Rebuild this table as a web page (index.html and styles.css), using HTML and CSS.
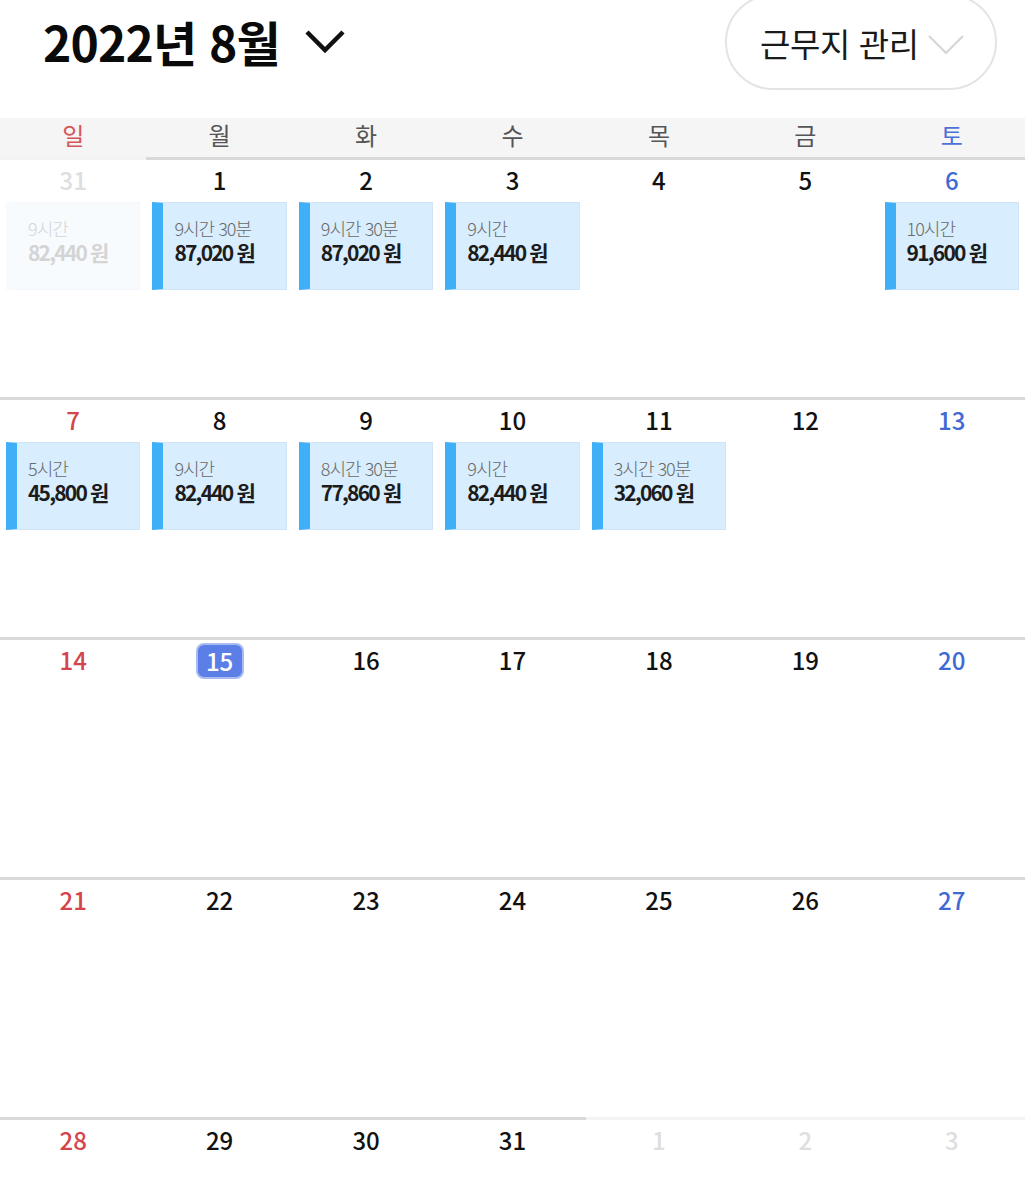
FILE: index.html
```html
<!DOCTYPE html>
<html lang="ko">
<head>
<meta charset="utf-8">
<link rel="stylesheet" href="styles.css">
</head>
<body>
<div class="page">
  <header class="top">
    <div class="title">
      <span class="title-text">2022년 8월</span>
      <svg class="title-chev" width="42" height="26" viewBox="0 0 42 26"><path d="M3 4 L21 22 L39 4" fill="none" stroke="#111" stroke-width="4.5" stroke-linecap="butt" stroke-linejoin="miter"/></svg>
    </div>
    <div class="place-btn">
      <span>근무지 관리</span>
      <svg width="38" height="22" viewBox="0 0 38 22"><path d="M2 3 L19 20 L36 3" fill="none" stroke="#d6d6d6" stroke-width="2.2"/></svg>
    </div>
  </header>

  <div class="weekdays">
    <div class="wd sun">일</div><div class="wd">월</div><div class="wd">화</div><div class="wd">수</div><div class="wd">목</div><div class="wd">금</div><div class="wd sat">토</div>
  </div>

  <div class="week">
    <div class="cell other"><div class="num">31</div><div class="card faded"><div class="hrs">9시간</div><div class="amt">82,440 원</div></div></div>
    <div class="cell"><div class="num">1</div><div class="card"><div class="hrs">9시간 30분</div><div class="amt">87,020 원</div></div></div>
    <div class="cell"><div class="num">2</div><div class="card"><div class="hrs">9시간 30분</div><div class="amt">87,020 원</div></div></div>
    <div class="cell"><div class="num">3</div><div class="card"><div class="hrs">9시간</div><div class="amt">82,440 원</div></div></div>
    <div class="cell"><div class="num">4</div></div>
    <div class="cell"><div class="num">5</div></div>
    <div class="cell"><div class="num sat">6</div><div class="card"><div class="hrs">10시간</div><div class="amt">91,600 원</div></div></div>
  </div>

  <div class="week">
    <div class="cell"><div class="num sun">7</div><div class="card"><div class="hrs">5시간</div><div class="amt">45,800 원</div></div></div>
    <div class="cell"><div class="num">8</div><div class="card"><div class="hrs">9시간</div><div class="amt">82,440 원</div></div></div>
    <div class="cell"><div class="num">9</div><div class="card"><div class="hrs">8시간 30분</div><div class="amt">77,860 원</div></div></div>
    <div class="cell"><div class="num">10</div><div class="card"><div class="hrs">9시간</div><div class="amt">82,440 원</div></div></div>
    <div class="cell"><div class="num">11</div><div class="card"><div class="hrs">3시간 30분</div><div class="amt">32,060 원</div></div></div>
    <div class="cell"><div class="num">12</div></div>
    <div class="cell"><div class="num sat">13</div></div>
  </div>

  <div class="week">
    <div class="cell"><div class="num sun">14</div></div>
    <div class="cell"><div class="num"><span class="today">15</span></div></div>
    <div class="cell"><div class="num">16</div></div>
    <div class="cell"><div class="num">17</div></div>
    <div class="cell"><div class="num">18</div></div>
    <div class="cell"><div class="num">19</div></div>
    <div class="cell"><div class="num sat">20</div></div>
  </div>

  <div class="week">
    <div class="cell"><div class="num sun">21</div></div>
    <div class="cell"><div class="num">22</div></div>
    <div class="cell"><div class="num">23</div></div>
    <div class="cell"><div class="num">24</div></div>
    <div class="cell"><div class="num">25</div></div>
    <div class="cell"><div class="num">26</div></div>
    <div class="cell"><div class="num sat">27</div></div>
  </div>

  <div class="week last">
    <div class="cell"><div class="num sun">28</div></div>
    <div class="cell"><div class="num">29</div></div>
    <div class="cell"><div class="num">30</div></div>
    <div class="cell"><div class="num">31</div></div>
    <div class="cell other"><div class="num">1</div></div>
    <div class="cell other"><div class="num">2</div></div>
    <div class="cell other"><div class="num">3</div></div>
  </div>
</div>
</body>
</html>
```

FILE: styles.css
```css
* { box-sizing: border-box; }
html, body {
  margin: 0;
  padding: 0;
  background: #fff;
  overflow: hidden;
}
body {
  font-family: "Noto Sans CJK KR", "Noto Sans", sans-serif;
  color: #111;
}
.page {
  width: 1025px;
  height: 1204px;
  overflow: hidden;
}
.top {
  height: 118px;
  display: flex;
  justify-content: space-between;
  align-items: flex-start;
}
.title {
  display: flex;
  align-items: center;
  padding-left: 43px;
  padding-top: 10px;
  gap: 24px;
}
.title-text {
  font-size: 48px;
  font-weight: 700;
  line-height: 62px;
  letter-spacing: -0.8px;
  color: #0a0a0a;
}
.title-chev {
  margin-top: 0;
}
.place-btn {
  margin-top: -6px;
  margin-right: 28px;
  width: 272px;
  height: 96px;
  border: 2px solid #e4e4e4;
  border-radius: 48px;
  display: flex;
  align-items: center;
  padding-left: 33px;
  gap: 8px;
}
.place-btn span {
  font-size: 33px;
  font-weight: 400;
  color: #1a1a1a;
  letter-spacing: -0.4px;
  padding-top: 2px;
}
.place-btn svg {
  margin-top: 4px;
}
.weekdays {
  display: grid;
  grid-template-columns: repeat(7, 1fr);
  height: 39px;
  background: #f5f5f5;
}
.wd {
  display: flex;
  align-items: center;
  justify-content: center;
  font-size: 24px;
  color: #555;
  line-height: 1;
  padding-bottom: 6px;
}
.wd.sun { color: #d4565a; }
.wd.sat { color: #4c72d6; }

.week {
  display: grid;
  grid-template-columns: repeat(7, 1fr);
  height: 240px;
}
.cell {
  border-top: 3px solid #d9d9d9;
  padding: 0 6px;
  display: flex;
  flex-direction: column;
}
.cell.other {
  border-top-color: #f3f3f3;
}
.num {
  height: 40px;
  display: flex;
  align-items: center;
  justify-content: center;
  font-size: 24px;
  font-weight: 500;
  color: #111;
  line-height: 1;
}
.num.sun { color: #d4464b; }
.num.sat { color: #3f6ad4; }
.cell.other .num { color: #dedede; }
.today {
  display: inline-flex;
  align-items: center;
  justify-content: center;
  width: 48px;
  height: 36px;
  border-radius: 8px;
  background: #5b7fe7;
  border: 2px solid #a9bcf2;
  color: #fff;
  font-weight: 500;
  margin-top: 1px;
}
.card {
  margin-top: 2px;
  height: 88px;
  background: #d8edfd;
  border: 1px solid #cfe5f7;
  border-left: 11px solid #3fb0f7;
  padding: 14px 0 0 11px;
}
.card.faded {
  background: #f8fbfe;
  border-color: #f3f7fb;
  border-left: 11px solid #f8fbfe;
}
.hrs {
  font-size: 18px;
  color: #6a6a6a;
  letter-spacing: -1px;
  line-height: 22px;
  font-weight: 300;
}
.amt {
  font-size: 21px;
  font-weight: 700;
  color: #1c1c1c;
  letter-spacing: -1.8px;
  line-height: 26px;
}
.card.faded .hrs, .card.faded .amt {
  color: #d4d4d4;
}
```
